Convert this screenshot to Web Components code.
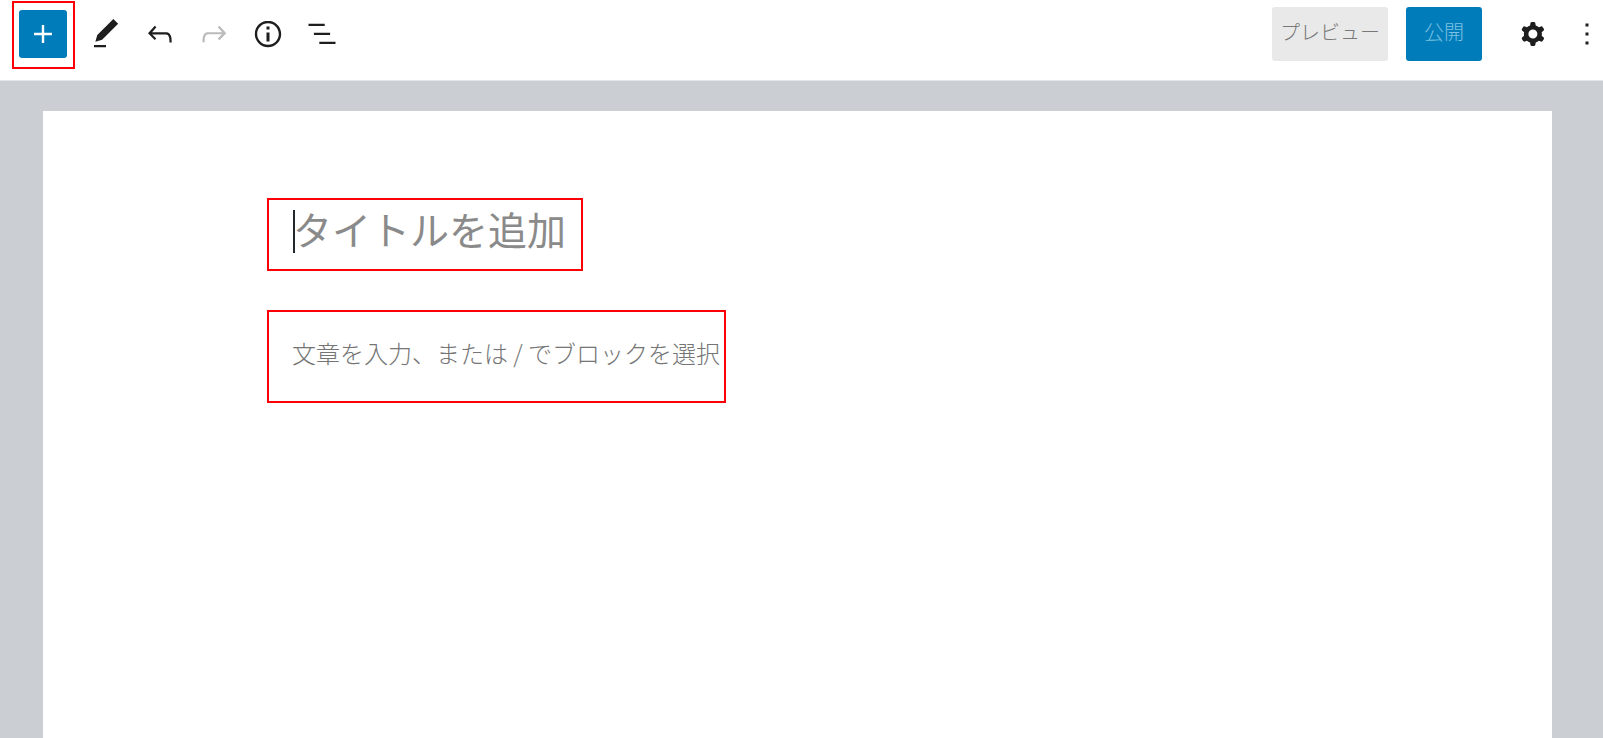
<!DOCTYPE html>
<html lang="ja">
<head>
<meta charset="utf-8">
<title>投稿を編集</title>
<style>
  html, body {
    height: 100%;
  }
  body {
    margin: 0;
    background: #fff;
    color: #1e1e1e;
    font-family: "Noto Sans CJK JP", sans-serif;
    font-weight: 300;
  }
</style>
</head>
<body>
<block-editor>
  <editor-header slot="header">
    <call-out slot="tools">
      <tool-button icon="plus" label="ブロックを追加" primary></tool-button>
    </call-out>
    <tool-button slot="tools" icon="edit" label="ツール"></tool-button>
    <tool-button slot="tools" icon="undo" label="元に戻す"></tool-button>
    <tool-button slot="tools" icon="redo" label="やり直す" disabled></tool-button>
    <tool-button slot="tools" icon="info" label="詳細"></tool-button>
    <tool-button slot="tools" icon="list" label="リスト表示"></tool-button>
    <text-button slot="buttons">プレビュー</text-button>
    <text-button slot="buttons" primary>公開</text-button>
    <tool-button slot="menus" icon="cog" label="設定"></tool-button>
    <tool-button slot="menus" icon="more" label="オプション"></tool-button>
  </editor-header>
  <call-out>
    <text-field size="title" placeholder="タイトルを追加"></text-field>
  </call-out>
  <call-out>
    <text-field size="body" placeholder="文章を入力、または / でブロックを選択"></text-field>
  </call-out>
</block-editor>

<script>
/**
 * Icon paths, all drawn on a 24 x 24 grid.
 */
const icons = {
  plus: 'M18 11.2h-5.2V6h-1.6v5.2H6v1.6h5.2V18h1.6v-5.2H18z',
  edit: 'M20.1 5.1L16.9 2 6.2 12.7l-1.3 4.4 4.5-1.3L20.1 5.1zM4 20.8h8v-1.5H4v1.5z',
  undo: 'M18.3 11.7c-.6-.6-1.4-.9-2.3-.9H6.7l2.9-3.3-1.1-1-4.5 5L8.5 16l1-1-2.7-2.7H16c.5 0 .9.2 1.3.5 1 1 1 3.4 1 4.5v.3h1.5v-.2c0-1.5 0-4.3-1.5-5.7z',
  redo: 'M15.6 6.5l-1.1 1 2.9 3.3H8c-.9 0-1.7.3-2.3.9-1.4 1.5-1.4 4.2-1.4 5.6v.2h1.5v-.3c0-1.1 0-3.5 1-4.5.3-.3.7-.5 1.3-.5h9.2L14.5 15l1.1 1.1 4.6-4.6-4.6-5z',
  info: 'M12 3.2c-4.8 0-8.8 3.9-8.8 8.8 0 4.8 3.9 8.8 8.8 8.8 4.8 0 8.8-3.9 8.8-8.8 0-4.8-4-8.8-8.8-8.8zm0 16c-4 0-7.2-3.3-7.2-7.2C4.8 8 8 4.8 12 4.8s7.2 3.3 7.2 7.2c0 4-3.2 7.2-7.2 7.2zM11 17h2v-6h-2v6zm0-8h2V7h-2v2z',
  list: 'M13.8 5.2H3v1.5h10.8V5.2zm-3.6 12v1.5H21v-1.5H10.2zm7.2-6H6.6v1.5h10.8v-1.5z',
  cog: 'M10.289 4.836A1 1 0 0111.275 4h1.306a1 1 0 01.987.836l.244 1.466c.787.26 1.503.679 2.108 1.218l1.393-.522a1 1 0 011.216.437l.653 1.13a1 1 0 01-.23 1.273l-1.148.944a6.025 6.025 0 010 2.435l1.149.946a1 1 0 01.23 1.272l-.653 1.13a1 1 0 01-1.216.437l-1.394-.522c-.605.54-1.32.958-2.108 1.218l-.244 1.466a1 1 0 01-.987.836h-1.306a1 1 0 01-.986-.836l-.244-1.466a5.995 5.995 0 01-2.108-1.218l-1.394.522a1 1 0 01-1.217-.436l-.653-1.131a1 1 0 01.23-1.272l1.149-.946a6.026 6.026 0 010-2.435l-1.148-.944a1 1 0 01-.23-1.272l.653-1.131a1 1 0 011.217-.437l1.393.522a5.994 5.994 0 012.108-1.218l.244-1.466zM14.929 12a3 3 0 11-6 0 3 3 0 016 0z',
  more: 'M13 19h-2v-2h2v2zm0-6h-2v-2h2v2zm0-6h-2V5h2v2z'
}

/**
 * Creates a template element from a string.
 *
 * @param {string} html - the markup.
 * @returns {HTMLTemplateElement} the template.
 */
function createTemplate (html) {
  const template = document.createElement('template')
  template.innerHTML = html
  return template
}

/**
 * Base class that attaches the shadow root.
 */
class BaseElement extends HTMLElement {
  /**
   * Creates an instance of the current type.
   */
  constructor () {
    super()

    this.attachShadow({ mode: 'open' })
      .appendChild(this.constructor.template.content.cloneNode(true))
  }
}

/**
 * The page: header on top, white sheet below.
 */
customElements.define('block-editor',
  class extends BaseElement {
    static template = createTemplate(`
      <style>
        :host {
          display: flex;
          flex-direction: column;
          min-height: 100%;
        }
        main {
          flex: 1;
          display: flex;
          padding: 30px 51px 0 43px;
          background: #cbced3;
        }
        .sheet {
          flex: 1;
          padding-top: 87px;
          background: #fff;
        }
        .column {
          display: flex;
          flex-direction: column;
          align-items: flex-start;
          gap: 39px;
          max-width: 1061px;
          margin: 0 auto;
        }
      </style>
      <slot name="header"></slot>
      <main>
        <div class="sheet">
          <div class="column"><slot></slot></div>
        </div>
      </main>
    `)
  }
)

/**
 * The bar with tools to the left, buttons and menus to the right.
 */
customElements.define('editor-header',
  class extends BaseElement {
    static template = createTemplate(`
      <style>
        :host {
          display: block;
          overflow: hidden;
          border-bottom: 1px solid #e4e6e8;
        }
        header {
          display: flex;
          box-sizing: border-box;
          height: 80px;
          padding: 0 0 12px 12px;
        }
        div {
          display: flex;
          align-items: center;
          gap: 6px;
        }
        .tools {
          margin-right: auto;
        }
        .tools ::slotted(call-out) {
          --pad: 7px 6px 9px 5px;
          --margin: 2px 1px 0 0;
        }
        .buttons {
          gap: 18px;
        }
        /* the last menu runs past the window's edge */
        .menus {
          margin: 0 -8px 0 27px;
        }
      </style>
      <header>
        <div class="tools"><slot name="tools"></slot></div>
        <div class="buttons"><slot name="buttons"></slot></div>
        <div class="menus"><slot name="menus"></slot></div>
      </header>
    `)
  }
)

/**
 * Red frame around whatever is passed in.
 */
customElements.define('call-out',
  class extends BaseElement {
    static template = createTemplate(`
      <style>
        :host {
          display: block;
          margin: var(--margin, 0);
          padding: var(--pad, 0);
          border: 2px solid #fb0007;
        }
      </style>
      <slot></slot>
    `)
  }
)

/**
 * Square button with an icon.
 */
customElements.define('tool-button',
  class extends BaseElement {
    static template = createTemplate(`
      <style>
        :host {
          display: block;
        }
        button {
          display: flex;
          align-items: center;
          justify-content: center;
          width: 48px;
          height: 48px;
          padding: 0;
          border: 0;
          border-radius: 3px;
          background: none;
          color: #1e1e1e;
        }
        button:disabled {
          color: #bbb;
        }
        :host([primary]) button {
          background: #007cba;
          color: #fff;
        }
        svg {
          width: 36px;
          height: 36px;
          fill: currentColor;
        }
      </style>
      <button type="button">
        <svg viewBox="0 0 24 24" aria-hidden="true"><path fill-rule="evenodd"/></svg>
      </button>
    `)

    /**
     * Called after the element is inserted into the DOM.
     */
    connectedCallback () {
      const button = this.shadowRoot.querySelector('button')
      button.setAttribute('aria-label', this.getAttribute('label'))
      button.disabled = this.hasAttribute('disabled')
      this.shadowRoot.querySelector('path').setAttribute('d', icons[this.getAttribute('icon')])
    }
  }
)

/**
 * Button with a text.
 */
customElements.define('text-button',
  class extends BaseElement {
    static template = createTemplate(`
      <style>
        :host {
          display: block;
        }
        button {
          display: block;
          height: 54px;
          padding: 0 8px 4px;
          border: 0;
          border-radius: 3px;
          background: #e9e9e9;
          color: #787878;
          font: inherit;
          font-size: 20px;
          line-height: 24px;
          white-space: nowrap;
        }
        :host([primary]) button {
          padding: 0 18px 4px;
          background: #007cba;
          color: #7cc0e2;
        }
      </style>
      <button type="button"><slot></slot></button>
    `)
  }
)

/**
 * Text box that is as wide as its text.
 */
customElements.define('text-field',
  class extends BaseElement {
    static template = createTemplate(`
      <style>
        :host {
          display: flex;
          align-items: center;
          box-sizing: border-box;
          height: 89px;
          padding: 0 4px 8px 23px;
        }
        :host([size="title"]) {
          height: 69px;
          padding: 0 15px 14px 24px;
        }
        input {
          field-sizing: content;
          padding: 0;
          border: 0;
          outline: 0;
          background: none;
          font: inherit;
          font-size: 24px;
          line-height: 36px;
        }
        :host([size="title"]) input {
          font-size: 39px;
          font-weight: 400;
          line-height: 56px;
        }
        input::placeholder {
          color: #757575;
          opacity: 1;
        }
        :host([size="title"]) input::placeholder {
          color: #8a8a8a;
        }
        .caret {
          display: none;
          width: 2px;
          height: 43px;
          margin: 7px -2px 0 0;
          background: #23282d;
        }
        :host([size="title"]) .caret {
          display: block;
        }
      </style>
      <span class="caret"></span>
      <input type="text">
    `)

    /**
     * Called after the element is inserted into the DOM.
     */
    connectedCallback () {
      const text = this.getAttribute('placeholder')
      const input = this.shadowRoot.querySelector('input')
      input.placeholder = text
      input.setAttribute('aria-label', text)
    }
  }
)
</script>
</body>
</html>
